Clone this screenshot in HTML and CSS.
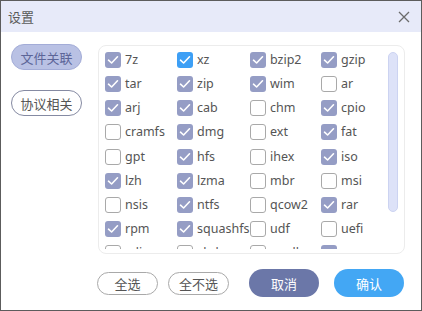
FILE: index.html
```html
<!DOCTYPE html>
<html lang="zh">
<head>
  <meta charset="UTF-8">
  <title>设置</title>
  <link rel="stylesheet" href="styles.css">
</head>
<body>
  <div class="dialog">
    <div class="titlebar">
      <span class="title">设置</span>
      <svg class="close" width="12" height="12" viewBox="0 0 12 12">
        <path d="M1 1 L11 11 M11 1 L1 11" stroke="#6b6b6b" stroke-width="1.3" fill="none"/>
      </svg>
    </div>

    <div class="main">
      <div class="sidebar">
        <div class="tab active">文件关联</div>
        <div class="tab">协议相关</div>
      </div>

      <div class="panel">
        <div class="scroll">
          <div class="grid" id="grid"></div>
        </div>
        <div class="track"><div class="thumb"></div></div>
      </div>
    </div>

    <div class="footer">
      <button class="btn small">全选</button>
      <button class="btn small">全不选</button>
      <button class="btn cancel">取消</button>
      <button class="btn ok">确认</button>
    </div>
  </div>

  <script>
    const items = [
      ['7z', 1], ['xz', 2], ['bzip2', 1], ['gzip', 1],
      ['tar', 1], ['zip', 1], ['wim', 1], ['ar', 0],
      ['arj', 1], ['cab', 1], ['chm', 0], ['cpio', 1],
      ['cramfs', 0], ['dmg', 1], ['ext', 0], ['fat', 1],
      ['gpt', 0], ['hfs', 1], ['ihex', 0], ['iso', 1],
      ['lzh', 1], ['lzma', 1], ['mbr', 0], ['msi', 0],
      ['nsis', 0], ['ntfs', 1], ['qcow2', 0], ['rar', 1],
      ['rpm', 1], ['squashfs', 1], ['udf', 0], ['uefi', 0],
      ['vdi', 0], ['vhd', 0], ['vmdk', 0], ['xar', 1]
    ];
    const check = '<svg width="16" height="16" viewBox="0 0 16 16"><path d="M3.5 8.2 L6.6 11 L12.5 4.8" stroke="#fff" stroke-width="1.6" fill="none" stroke-linecap="round" stroke-linejoin="round"/></svg>';
    const grid = document.getElementById('grid');
    items.forEach(function (it) {
      const cls = it[1] === 2 ? 'box on focus' : it[1] ? 'box on' : 'box';
      grid.insertAdjacentHTML('beforeend',
        '<label class="item"><span class="' + cls + '">' + (it[1] ? check : '') +
        '</span><span class="name">' + it[0] + '</span></label>');
    });
  </script>
</body>
</html>
```

FILE: styles.css
```css
* {
  box-sizing: border-box;
}
html, body {
  margin: 0;
  padding: 0;
}
body {
  width: 422px;
  height: 311px;
  font-family: "Noto Sans", "Noto Sans CJK SC", sans-serif;
  font-size: 13px;
  color: #555;
  background: #fff;
}
.dialog {
  width: 422px;
  height: 311px;
  border: 1px solid #5c5c5c;
  display: flex;
  flex-direction: column;
}
.titlebar {
  height: 31px;
  background: #e7eaf9;
  display: flex;
  align-items: center;
  justify-content: space-between;
  padding: 0 11px 0 7px;
}
.title {
  font-family: "Noto Sans CJK SC", sans-serif;
  font-size: 13px;
  color: #5a5a5a;
}
.main {
  display: flex;
  margin-top: 12px;
}
.sidebar {
  width: 97px;
  padding-left: 10px;
  display: flex;
  flex-direction: column;
  gap: 20px;
}
.tab {
  width: 71px;
  height: 26px;
  border-radius: 13px;
  border: 1px solid #858aa2;
  display: flex;
  align-items: center;
  justify-content: center;
  font-family: "Noto Sans CJK SC", sans-serif;
  font-size: 13px;
  color: #555;
}
.tab.active {
  background: #b9c1e4;
  border-color: #a3acd7;
  color: #5c6598;
}
.panel {
  margin-top: 1px;
  width: 307px;
  height: 209px;
  border: 1px solid #ececec;
  border-radius: 8px;
  overflow: hidden;
  display: flex;
}
.scroll {
  height: 203px;
  overflow: hidden;
  flex: none;
}
.grid {
  display: grid;
  grid-template-columns: 72px 73px 71px 60px;
  grid-auto-rows: 24.15px;
  padding: 2px 0 0 6px;
}
.item {
  display: flex;
  align-items: center;
  gap: 4px;
  white-space: nowrap;
}
.box {
  width: 16px;
  height: 16px;
  border: 1px solid #a9a9a9;
  border-radius: 3px;
  background: #fff;
  flex: none;
  display: flex;
}
.box.on {
  border: none;
  background: #959dc5;
}
.box.focus {
  background: #3d9ff5;
}
.name {
  color: #555;
  font-size: 12.5px;
  line-height: 16px;
}
.track {
  margin-left: 7px;
  padding-top: 6px;
}
.thumb {
  width: 10px;
  height: 160px;
  border-radius: 5px;
  background: #dde2f8;
  border: 1px solid #ccd3f1;
}
.footer {
  display: flex;
  align-items: center;
  padding-left: 96px;
  margin-top: 15px;
}
.btn {
  font-family: "Noto Sans CJK SC", sans-serif;
  font-size: 13px;
  border-radius: 14px;
  padding: 0;
  cursor: pointer;
}
.small {
  width: 61px;
  height: 23px;
  border-radius: 12px;
  border: 1px solid #a9a9a9;
  background: #fff;
  color: #555;
  margin-right: 10px;
}
.cancel {
  width: 70px;
  height: 28px;
  border: none;
  background: #6b77a8;
  color: #fff;
  margin-left: 10px;
  margin-right: 15px;
}
.ok {
  width: 70px;
  height: 28px;
  border: none;
  background: #43a7f4;
  color: #fff;
}
```
